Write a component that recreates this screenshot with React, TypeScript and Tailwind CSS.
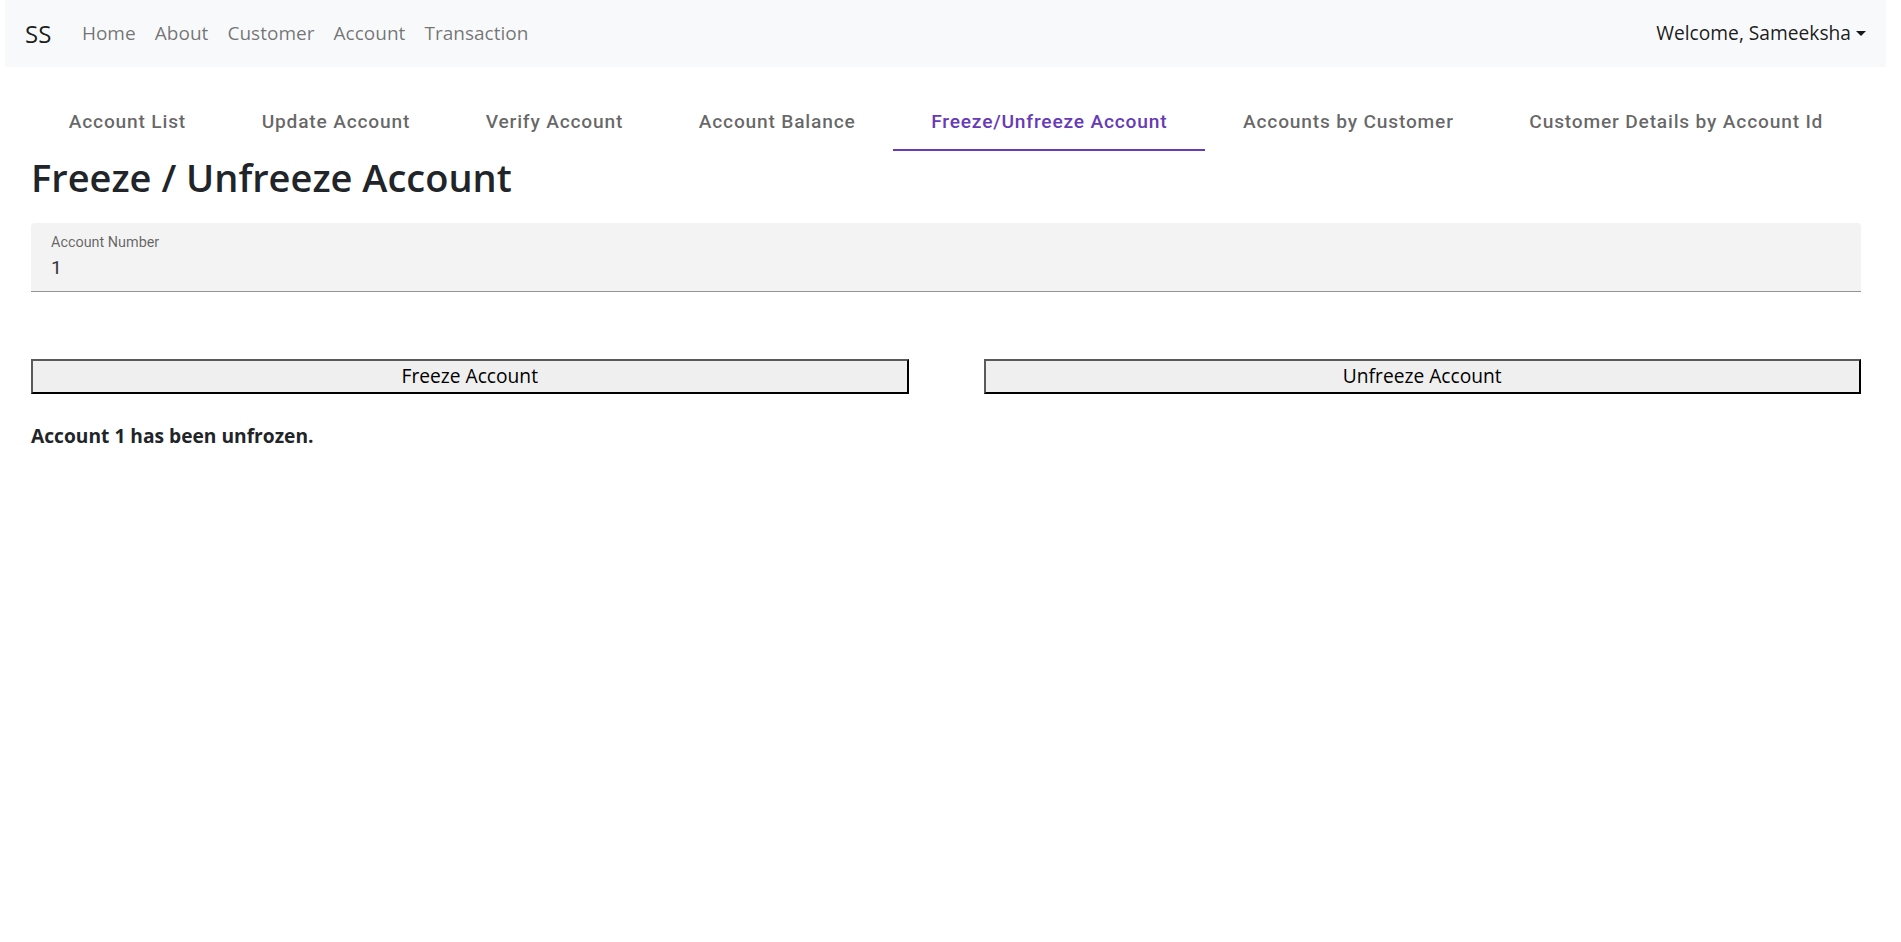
import { useState } from 'react';

const navLinks = ['Home', 'About', 'Customer', 'Account', 'Transaction'];

const tabs = [
  'Account List',
  'Update Account',
  'Verify Account',
  'Account Balance',
  'Freeze/Unfreeze Account',
  'Accounts by Customer',
  'Customer Details by Account Id',
];

export default function App() {
  const [activeTab, setActiveTab] = useState(4);
  const [accountNumber, setAccountNumber] = useState('1');
  const [message, setMessage] = useState('Account 1 has been unfrozen.');

  return (
    <div className="min-h-screen bg-white font-['Open_Sans',sans-serif] text-[#212529]">
      <div className="ml-[5px] w-[1881px]">
        {/* Navbar */}
        <nav className="flex h-[67px] items-center justify-between bg-[#f8f9fa] px-[20px]">
          <div className="flex items-center">
            <span className="mr-[21px] text-[24px] leading-[1.5] text-black/90">SS</span>
            <ul className="flex">
              {navLinks.map((link) => (
                <li key={link} className="px-[9.6px] text-[19px] leading-[1.5] text-black/55">
                  {link}
                </li>
              ))}
            </ul>
          </div>
          <div className="flex items-center text-[19.2px] leading-[1.5] text-black/90">
            Welcome, Sameeksha
            <span className="ml-[5px] inline-block h-0 w-0 border-x-[5.8px] border-t-[5.8px] border-x-transparent border-t-black/90" />
          </div>
        </nav>

        <main className="pl-[26px] pr-[25px]">
          {/* Tabs */}
          <div className="mt-[26px] flex h-[58px] font-['Roboto',sans-serif]">
            {tabs.map((tab, i) => (
              <button
                key={tab}
                onClick={() => setActiveTab(i)}
                className={`relative flex flex-auto items-center justify-center px-[19px] text-[19.2px] font-medium tracking-[0.8px] ${
                  i === activeTab ? 'text-[#673ab7]' : 'text-black/60'
                }`}
              >
                {tab}
                {i === activeTab && <span className="absolute inset-x-0 bottom-0 h-[2.4px] bg-[#673ab7]" />}
              </button>
            ))}
          </div>

          <h2 className="mt-[4px] text-[38px] font-semibold leading-[1.2]">Freeze / Unfreeze Account</h2>

          {/* Account number field */}
          <div className="mt-[22px] h-[69px] rounded-t-[4px] border-b border-[#949494] bg-[#f3f3f3] pl-[20px] pt-[11px] font-['Roboto',sans-serif]">
            <div className="text-[14.4px] leading-[17px] text-black/60">Account Number</div>
            <input
              value={accountNumber}
              onChange={(e) => setAccountNumber(e.target.value)}
              className="mt-[5px] block h-[23px] w-full bg-transparent text-[19.2px] leading-[23px] text-[#333] outline-none"
            />
          </div>

          <div className="mt-[67px] grid grid-cols-2 gap-x-[75px]">
            <button
              onClick={() => setMessage(`Account ${accountNumber} has been frozen.`)}
              className="h-[35px] border-2 border-b-black border-l-[#5a5a5a] border-r-black border-t-[#5a5a5a] bg-[#efefef] text-[19.2px] text-black"
            >
              Freeze Account
            </button>
            <button
              onClick={() => setMessage(`Account ${accountNumber} has been unfrozen.`)}
              className="h-[35px] border-2 border-b-black border-l-[#5a5a5a] border-r-black border-t-[#5a5a5a] bg-[#efefef] text-[19.2px] text-black"
            >
              Unfreeze Account
            </button>
          </div>

          <p className="mt-[28px] text-[19.2px] font-bold leading-[1.5]">{message}</p>
        </main>
      </div>
    </div>
  );
}
